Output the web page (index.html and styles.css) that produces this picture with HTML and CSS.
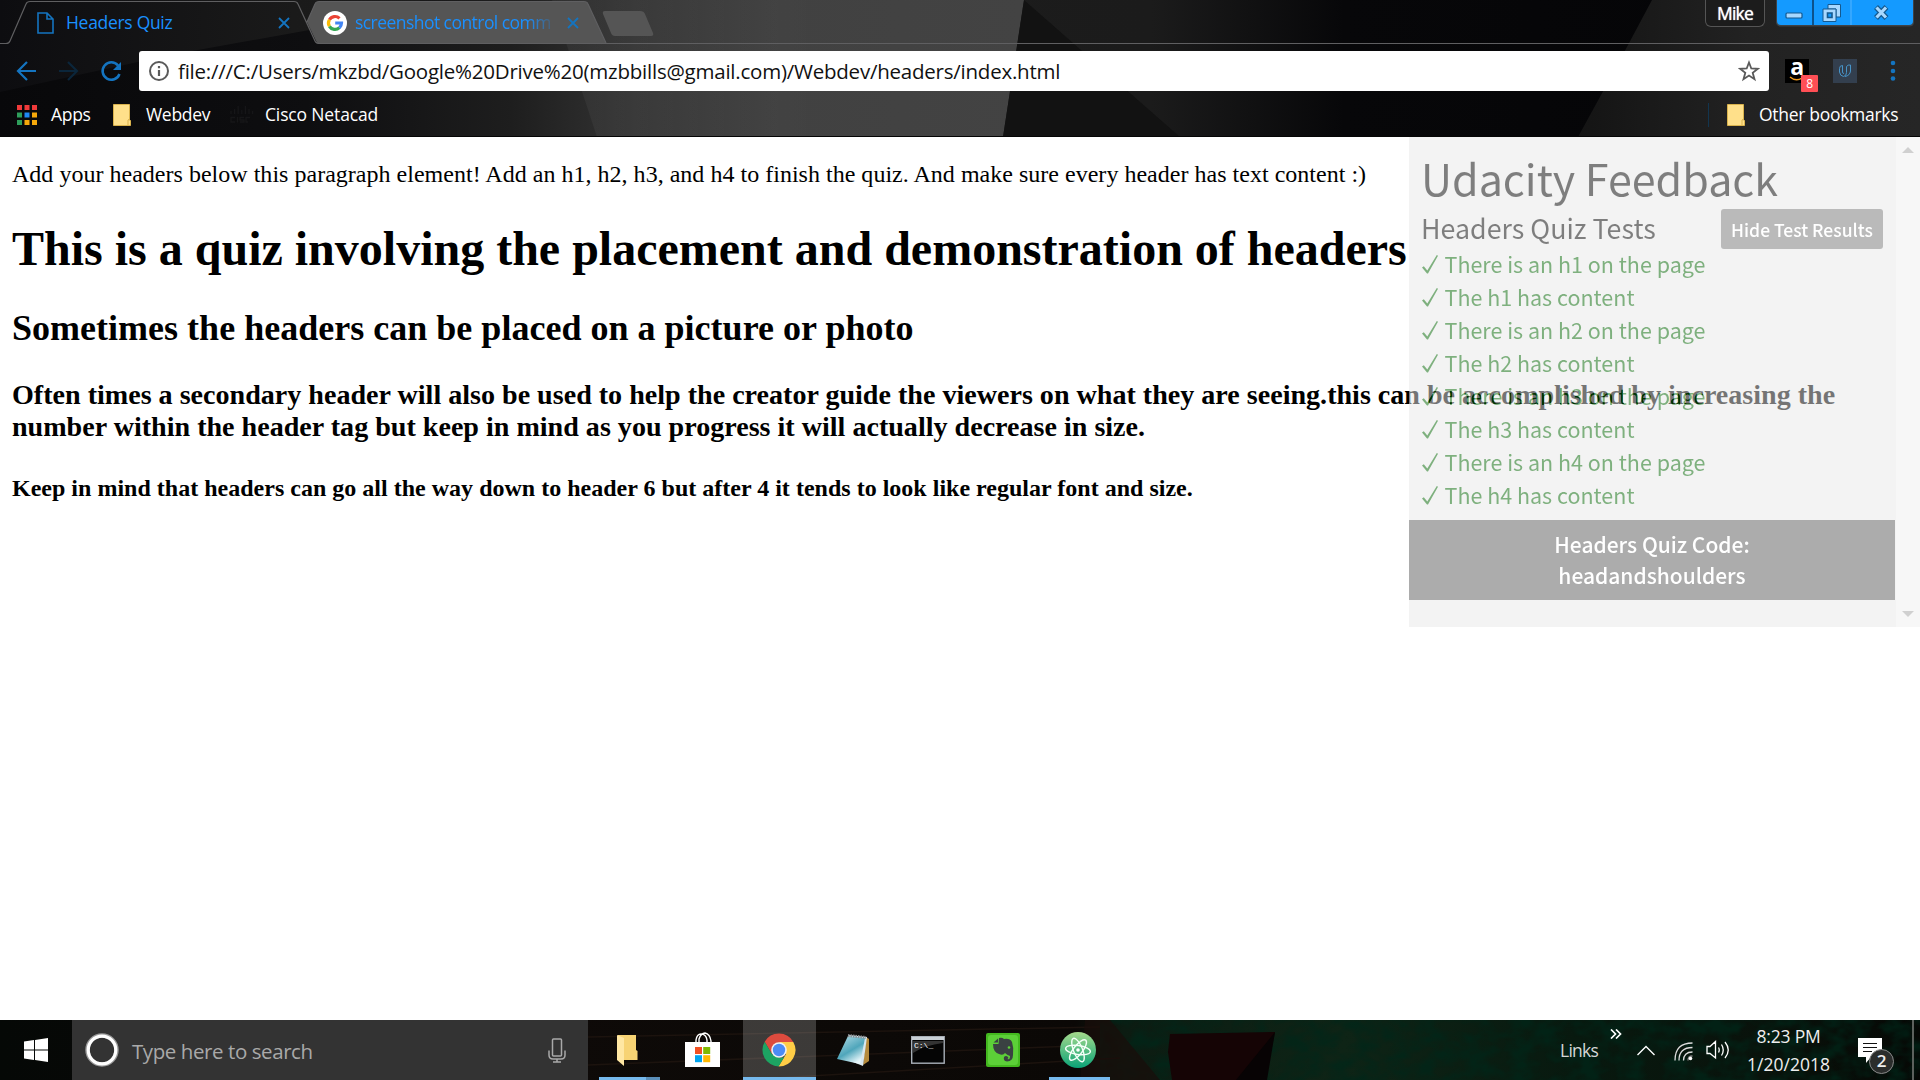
FILE: index.html
```html
<!DOCTYPE html>
<html lang="en">
<head>
<meta charset="utf-8">
<title>Headers Quiz</title>
<link rel="stylesheet" href="styles.css">
</head>
<body>
<svg width="0" height="0" class="defs">
  <symbol id="folder" viewBox="0 0 18 22"><path d="M.5.5h16v15.500l1 .5v5H.5z" fill="#ffe08a" stroke="#d9b24c"/><path d="M15 21v-5l1.500-1" fill="none" stroke="#d9b24c"/></symbol>
  <symbol id="close" viewBox="0 0 12 12"><path d="M1 1l10 10M11 1L1 11" stroke="#1474c0" stroke-width="1.800" fill="none"/></symbol>
  <symbol id="check" viewBox="0 0 16 19"><path d="M0 12.500L1.800 11.200 5.300 15.500 14.800 0 16 .8 6 18.500H5z" fill="#006400"/></symbol>
</svg>

<header class="browser">
  <svg class="theme" viewBox="0 0 1920 137" preserveAspectRatio="none">
    <defs>
      <linearGradient id="left" x1="0" x2="1"><stop offset="0" stop-color="#08080a"/><stop offset=".3" stop-color="#0e0e10"/><stop offset=".5" stop-color="#1e1e1e"/><stop offset=".62" stop-color="#333"/><stop offset=".76" stop-color="#414141"/><stop offset="1" stop-color="#434343"/></linearGradient>
      <linearGradient id="mid" x1="0" x2="1"><stop offset="0" stop-color="#1f1f1f"/><stop offset=".6" stop-color="#1b1b1b"/><stop offset=".7" stop-color="#070709"/><stop offset="1" stop-color="#040406"/></linearGradient>
      <linearGradient id="right" x1="0" x2="1"><stop offset="0" stop-color="#141414"/><stop offset=".5" stop-color="#222"/><stop offset="1" stop-color="#262626"/></linearGradient>
      <linearGradient id="sheen" x1="0" x2="1"><stop offset="0" stop-color="#0d0d10"/><stop offset=".7" stop-color="#1a1a1a"/><stop offset="1" stop-color="#1c1c1c"/></linearGradient>
      <linearGradient id="fold" x1="0" x2="1"><stop offset="0" stop-color="#fff" stop-opacity=".05"/><stop offset="1" stop-color="#fff" stop-opacity="0"/></linearGradient>
    </defs>
    <rect width="1920" height="137" fill="url(#mid)"/>
    <path d="M0 0H1024L1003 137H0z" fill="url(#left)"/>
    <path d="M0 0H420V10L170 55 0 92z" fill="url(#sheen)"/>
    <path d="M552 0H820V137H597z" fill="url(#fold)"/>
    <path d="M1024 0L1180 137H1003z" fill="#121212"/>
    <path d="M1652 0H1920V137H1578L1612 75z" fill="url(#right)"/>
    <path d="M0 136.500H1920" stroke="#050505"/>
  </svg>

  <div class="tabstrip">
    <svg class="tabshapes" viewBox="0 0 1920 45">
      <path d="M307 22L315 4Q316 1.500 319 1.500H584Q587 1.500 588 4L606 43.500H320Q317 43.500 316 41z" fill="#555"/>
      <path d="M0 43.500H6Q9 43.500 10 41L26 4Q27 1.500 30 1.500H294Q297 1.500 298 4L315 41Q316 43.500 320 43.500H1920M307 22L315 4Q316 1.500 319 1.500H584Q587 1.500 588 4L606 43" fill="none" stroke="#5f5f61" stroke-width="1.200"/>
      <path d="M605 11H640Q644 11 645 14L653 33Q654 36 651 36H615Q612 36 611 33L603 14Q602 11 605 11z" fill="#555"/>
    </svg>
    <div class="tab tab-active">
      <svg width="17" height="22" viewBox="0 0 17 22" fill="none" stroke="#1474c0" stroke-width="1.600"><path d="M1 1h9l6 6v14H1zM10 1v6h6"/></svg>
      <span class="tab-title">Headers Quiz</span>
      <svg class="x" width="12" height="12"><use href="#close"/></svg>
    </div>
    <div class="tab tab-back">
      <svg width="24" height="24" viewBox="0 0 24 24"><circle cx="12" cy="12" r="12" fill="#fff"/><g fill="none" stroke-width="3.200"><path d="M6.400 8.700A6.500 6.500 0 0 1 16.500 7.300" stroke="#ea4335"/><path d="M6.400 8.700A6.500 6.500 0 0 0 6.400 15.300" stroke="#fbbc05"/><path d="M6.400 15.300A6.500 6.500 0 0 0 16.400 16.700" stroke="#34a853"/><path d="M16.400 16.700A6.500 6.500 0 0 0 18.500 12H12.200" stroke="#4285f4"/></g></svg>
      <span class="tab-title fade">screenshot control comm</span>
      <svg class="x" width="12" height="12"><use href="#close"/></svg>
    </div>
    <div class="user">Mike</div>
    <svg class="winbtns" width="138" height="27" viewBox="0 0 138 27">
      <path d="M0 0H138V22Q138 26.500 133 26.500H5Q0 26.500 0 22z" fill="#3d4247"/>
      <path d="M1 0H137V21Q137 25 133 25H5Q1 25 1 21z" fill="#149aff"/>
      <path d="M37 0V25" stroke="#0a3a66" stroke-width="1.500"/><path d="M75 0V25" stroke="#55b4ff"/>
      <rect x="10" y="13" width="16" height="5" rx="1" fill="#a8d8ff" stroke="#14598f" stroke-width="1.200"/>
      <g stroke="#14598f"><path d="M52 4.500H64.500V17H60V9H52z" fill="#a8d8ff"/><path d="M47 9H60V21.500H47z" fill="#a8d8ff"/><path d="M51.500 13H56V17.500H51.500z" fill="#149aff" stroke-width="1.600"/></g>
      <path d="M100 7L110.500 18M110.500 7L100 18" stroke="#14598f" stroke-width="5.500"/><path d="M100.500 7.500L110 17.500M110 7.500L100.500 17.500" stroke="#a8d8ff" stroke-width="3.200"/>
    </svg>
  </div>

  <div class="toolbar">
    <svg class="nav" width="106" height="24" viewBox="0 0 106 24" fill="none" stroke="#1474c0" stroke-width="2.200">
      <path d="M20 12H2M11 3L2 12L11 21"/>
      <path d="M43 12H61M52 3L61 12L52 21" stroke="#0b263b"/>
      <path d="M102 6.500A8.700 8.700 0 1 0 103.500 15" stroke-width="2.500"/><path d="M105 3V11H97z" fill="#1474c0" stroke="none"/>
    </svg>
    <div class="omnibox">
      <svg width="22" height="22" viewBox="0 0 22 22"><circle cx="11" cy="11" r="9" fill="none" stroke="#5a5a5a" stroke-width="2"/><path d="M11 10V16M11 6V8.200" stroke="#5a5a5a" stroke-width="2.200"/></svg>
      <span class="url">file:///C:/Users/mkzbd/Google%20Drive%20(mzbbills@gmail.com)/Webdev/headers/index.html</span>
      <svg width="22" height="22" viewBox="0 0 22 22"><path d="M11 2.500L13.300 8.500L19.800 8.800L14.700 12.800L16.500 19.200L11 15.500L5.500 19.200L7.300 12.800L2.200 8.800L8.700 8.500z" fill="none" stroke="#5a5a5a" stroke-width="1.800"/></svg>
    </div>
    <div class="ext amazon"><span>a</span><svg width="18" height="6" viewBox="0 0 18 6"><path d="M2 1Q8 6 14 2M13 1l3-.5-1 3" fill="none" stroke="#f39c1f" stroke-width="1.500"/></svg><b>8</b></div>
    <svg class="ext" width="24" height="24" viewBox="0 0 24 24"><rect width="24" height="24" fill="#333f4e"/><path d="M9.500 6.500Q6.500 6.500 6.500 9.500V13Q7 17 10.500 17.500M9.500 6.500V13Q9.500 14.500 11 14.500M10.500 17.500Q13.500 17 13.500 13.500V7.500Q15 5.500 17.500 6V12Q17 16.500 12 17.500" fill="none" stroke="#4794c8"/></svg>
    <svg class="dots" width="6" height="22" viewBox="0 0 6 22" fill="#1474c0"><circle cx="3" cy="3" r="2.300"/><circle cx="3" cy="11" r="2.300"/><circle cx="3" cy="18.500" r="2.300"/></svg>
  </div>

  <div class="bookmarks">
    <svg width="20" height="20" viewBox="0 0 20 20"><g fill="#f03a3a"><path d="M0 0h5v5H0zM7.500 0h5v5h-5zM15 0h5v5h-5z"/></g><path d="M0 7.500h5v5H0zM0 15h5v5H0z" fill="#2e9e5b"/><path d="M7.500 7.500h5v5h-5z" fill="#1e88f5"/><path d="M15 7.500h5v5h-5zM7.500 15h5v5h-5zM15 15h5v5h-5z" fill="#f5a80a"/></svg>
    <span class="apps">Apps</span>
    <svg width="18" height="22"><use href="#folder"/></svg>
    <span class="webdev">Webdev</span>
    <svg class="cisco" width="24" height="18" viewBox="0 0 24 18"><path d="M1 5V8M4.600 3V8M8.200 0V8M11.800 4V8M15.400 0V8M19 3V8M22.600 5V8" stroke="#161618" stroke-width="1.300"/><path d="M5 11.500H1V16H5M7.500 11V16.500M14 11.500H10V14H14V16H10M20 11.500H16V16H18" fill="none" stroke="#161618" stroke-width="1.300"/></svg>
    <span class="netacad">Cisco Netacad</span>
    <i class="sep"></i>
    <svg width="18" height="22"><use href="#folder"/></svg>
    <span class="other">Other bookmarks</span>
  </div>
</header>

<main class="page">
  <p>Add your headers below this paragraph element! Add an h1, h2, h3, and h4 to finish the quiz. And make sure every header has text content :)</p>
  <h1>This is a quiz involving the placement and demonstration of headers</h1>
  <h2>Sometimes the headers can be placed on a picture or photo</h2>
  <h3>Often times a secondary header will also be used to help the creator guide the viewers on what they are seeing.this can be accomplished by increasing the number within the header tag but keep in mind as you progress it will actually decrease in size.</h3>
  <h4>Keep in mind that headers can go all the way down to header 6 but after 4 it tends to look like regular font and size.</h4>

  <aside class="feedback">
    <div class="panel">
      <div class="title">Udacity Feedback</div>
      <div class="subhead"><span>Headers Quiz Tests</span><button>Hide Test Results</button></div>
      <ul>
        <li><svg width="16" height="19"><use href="#check"/></svg>There is an h1 on the page</li>
        <li><svg width="16" height="19"><use href="#check"/></svg>The h1 has content</li>
        <li><svg width="16" height="19"><use href="#check"/></svg>There is an h2 on the page</li>
        <li><svg width="16" height="19"><use href="#check"/></svg>The h2 has content</li>
        <li><svg width="16" height="19"><use href="#check"/></svg>There is an h3 on the page</li>
        <li><svg width="16" height="19"><use href="#check"/></svg>The h3 has content</li>
        <li><svg width="16" height="19"><use href="#check"/></svg>There is an h4 on the page</li>
        <li><svg width="16" height="19"><use href="#check"/></svg>The h4 has content</li>
      </ul>
      <div class="code">Headers Quiz Code:<br>headandshoulders</div>
    </div>
    <div class="scrollbar"><i class="up"></i><i class="down"></i></div>
  </aside>
</main>

<footer class="taskbar">
  <svg class="wallpaper" viewBox="0 0 1920 60" preserveAspectRatio="none">
    <defs>
      <linearGradient id="desk" x1="0" x2="1"><stop offset="0" stop-color="#050806"/><stop offset=".28" stop-color="#0e0a08"/><stop offset=".45" stop-color="#0c0907"/><stop offset=".56" stop-color="#0b0806"/><stop offset=".585" stop-color="#0c1c12"/><stop offset=".7" stop-color="#0e2416"/><stop offset=".82" stop-color="#08190f"/><stop offset=".92" stop-color="#09120b"/><stop offset="1" stop-color="#060805"/></linearGradient>
      <filter id="leaves" x="0" y="0" width="1" height="1"><feTurbulence type="fractalNoise" baseFrequency=".045 .07" numOctaves="3" seed="4"/><feColorMatrix values="0 0 0 0 0  0 0 0 0 .02  0 0 0 0 .01  2.600 0 0 0 -.9"/></filter>
    </defs>
    <rect width="1920" height="60" fill="url(#desk)"/>
    <rect x="1100" width="820" height="60" filter="url(#leaves)" opacity=".7"/>
    <path d="M588 17L1100 7M588 45L1100 25M740 60L1120 38" stroke="#1c130e" stroke-width="1.500"/>
    <path d="M1085 0H1110L1160 60H1080z" fill="#1a0d0a" opacity=".7"/>
    <path d="M1170 14L1275 12L1265 60H1172L1168 32z" fill="#150405"/>
    <path d="M1275 12L1236 60H1267z" fill="#070304"/>
  </svg>
  <div class="start"><svg width="24" height="24" viewBox="0 0 24 24" fill="#fff"><path d="M0 3.400L10 2V11.500H0zM11 1.900L24 0V11.500H11zM0 12.500H10V22L0 20.600zM11 12.500H24V24L11 22.100z"/></svg></div>
  <div class="search">
    <svg width="34" height="34" viewBox="0 0 34 34"><circle cx="17" cy="17" r="14.500" fill="none" stroke="#999" stroke-width="4.500"/><circle cx="17" cy="17" r="13.800" fill="none" stroke="#fff" stroke-width="3.200"/></svg>
    <span>Type here to search</span>
    <svg width="18" height="25" viewBox="0 0 18 25" fill="none" stroke="#a9a9a9" stroke-width="1.500"><rect x="4.500" y="1" width="9" height="17" rx="1"/><path d="M1 12.500V17Q1 21 5 21H13Q17 21 17 17V12.500M9 21V24M5 24H13"/></svg>
  </div>
  <nav class="apps-row">
    <div class="app running explorer"><svg width="22" height="32" viewBox="0 0 22 32"><path d="M1 1H19V16L20.500 17V26H1z" fill="#f7d374"/><path d="M0 1L7 4V32L0 26z" fill="#ffe7a3"/></svg></div>
    <div class="app"><svg width="36" height="36" viewBox="0 0 36 36"><path d="M11 12V8Q12 2 16 2Q21 2 22 8V12M14 12V7Q16 1 20 1Q25 2 26 9V12" fill="none" stroke="#fff" stroke-width="1.400"/><path d="M0 10H35V35H0z" fill="#fff"/><path d="M10 15h7v7h-7z" fill="#f25022"/><path d="M18.200 15h7v7h-7z" fill="#7fba00"/><path d="M10 23.200h7v7h-7z" fill="#00a4ef"/><path d="M18.200 23.200h7v7h-7z" fill="#ffb900"/></svg></div>
    <div class="app running active"><svg width="34" height="34" viewBox="0 0 34 34"><path d="M31.300 8.900A16.500 16.500 0 0 1 16.500 33.500L24.100 21.100 17 8.900z" fill="#ffcd46"/><path d="M2.700 8.700L10 21.200 17 17 17 8.900H31.300A16.500 16.500 0 0 0 2.700 8.700z" fill="#dd4b3e"/><path d="M2.700 8.700L10 21.200 17 24.800 22 24.500 16.500 33.500A16.500 16.500 0 0 1 2.700 8.700z" fill="#1da462"/><circle cx="17" cy="17" r="7.800" fill="#f1f1f1"/><circle cx="17" cy="17" r="6.200" fill="#4c8bf5"/></svg></div>
    <div class="app"><svg width="34" height="34" viewBox="0 0 34 34"><defs><linearGradient id="pad" x1="0" y1="0" x2=".6" y2="1"><stop offset="0" stop-color="#b9dfe8"/><stop offset=".6" stop-color="#4fa6bb"/><stop offset="1" stop-color="#e7f6fa"/></linearGradient></defs><path d="M30 4L33 6V28L27 32z" fill="#b58a3c"/><path d="M13 2L31 4 27 33 17 29z" fill="#d9e7ee"/><path d="M12 3L29 5 24 31 1 26z" fill="url(#pad)"/><path d="M12 2.500L30 4.500" stroke="#8a8f93" stroke-width="3" stroke-dasharray="1.500 1"/></svg></div>
    <div class="app"><svg width="34" height="28" viewBox="0 0 34 28"><rect x=".7" y=".7" width="32.500" height="26.500" fill="#050505" stroke="#a9b0b8" stroke-width="1.400"/><path d="M1 1H33V4H1z" fill="#c9d0d6"/><path d="M2 5H32L32 7Q14 9 2 17z" fill="#333"/><text x="3" y="12" class="prompt">C:\_</text></svg></div>
    <div class="app"><svg width="34" height="34" viewBox="0 0 34 34"><rect width="34" height="34" rx="2" fill="#43b91f"/><rect x="2" y="2" width="30" height="30" rx="3" fill="#5ccf38"/><path d="M13 5Q16 4 18 6Q24 5 26 9Q28 15 27 22Q27 28 21 28.500Q17 28 18 24Q20 22 22 24Q23 25 21.500 26Q24 27 24 23Q21 22 19 20Q17 23 13 21Q7 19 7 11H12.500z" fill="#3a4142"/><path d="M7.500 9.500L12 5.500V9.500z" fill="#3a4142"/><circle cx="23" cy="14.500" r="1.300" fill="#5ccf38"/></svg></div>
    <div class="app running atom"><svg width="36" height="36" viewBox="0 0 36 36"><defs><linearGradient id="atomg" x1="0" y1="0" x2="0" y2="1"><stop offset="0" stop-color="#a5d98c"/><stop offset="1" stop-color="#0ba377"/></linearGradient></defs><circle cx="18" cy="18" r="18" fill="url(#atomg)"/><g fill="none" stroke="#f4fff8" stroke-width="1.400"><ellipse cx="18" cy="18" rx="12.500" ry="4.500" transform="rotate(8 18 18)"/><ellipse cx="18" cy="18" rx="12.500" ry="4.500" transform="rotate(68 18 18)"/><ellipse cx="18" cy="18" rx="12.500" ry="4.500" transform="rotate(128 18 18)"/></g><circle cx="18" cy="18" r="1.800" fill="#fff"/></svg></div>
  </nav>
  <div class="tray">
    <span class="links">Links</span>
    <svg class="more" width="12" height="10" viewBox="0 0 12 10" fill="none" stroke="#fff" stroke-width="1.700"><path d="M1 .5L5.500 5 1 9.500M6 .5L10.500 5 6 9.500"/></svg>
    <svg class="caret" width="18" height="11" viewBox="0 0 18 11" fill="none" stroke="#fff" stroke-width="1.400"><path d="M.5 10L9 1.500 17.500 10"/></svg>
    <svg class="wifi" width="19" height="19" viewBox="0 0 19 19" fill="none" stroke="#ddd" stroke-width="1.300"><path d="M1 18.500Q1 1 18.500 1M5 18.500Q5 5.500 18.500 5.500M9.500 18.500Q9.500 10 18.500 10"/><path d="M14 18.500Q14 14 18.500 14" stroke="#888"/><circle cx="16.500" cy="16.500" r="1.800" fill="#fff" stroke="none"/></svg>
    <svg class="sound" width="24" height="20" viewBox="0 0 24 20" fill="none" stroke="#fff" stroke-width="1.300"><path d="M1 6.500H4L9.500 1.500V18L4 13.500H1zM12.500 7.500Q14 10 12.500 12.500M15.500 4.500Q19 10 15.500 15.500M19 2Q25.500 10 19 18"/></svg>
    <div class="clock"><span class="time">8:23 PM</span><span>1/20/2018</span></div>
    <div class="action"><svg width="24" height="26" viewBox="0 0 24 26"><path d="M0 0H24V19H13L8 25V19H0z" fill="#fff"/><path d="M5 5.500H19M5 9.500H19M5 13.500H14" stroke="#111" stroke-width="1.200"/></svg><b>2</b></div>
    <i class="peek"></i>
  </div>
</footer>
</body>
</html>
```
FILE: styles.css
```css
* { box-sizing: border-box; }
html, body { margin: 0; height: 100%; }
body {
  display: flex;
  flex-direction: column;
  width: 1920px;
  height: 1080px;
  overflow: hidden;
  background: #fff;
  font-family: "Open Sans", "Noto Sans", sans-serif;
  font-size: 17.5px;
}
svg { display: block; flex: none; }
.defs { position: absolute; }

/* Browser frame */
.browser {
  position: relative;
  flex: none;
  height: 137px;
  color: #fff;
  letter-spacing: -.3px;
  white-space: nowrap;
}
.theme, .tabshapes, .wallpaper { position: absolute; top: 0; left: 0; width: 100%; height: 100%; }
.tabstrip { position: relative; display: flex; height: 45px; }
.tabshapes { height: 45px; }
.tab {
  position: relative;
  display: flex;
  align-items: center;
  height: 46px;
  flex: none;
  color: #1a90ff;
}
.tab-active { width: 307px; padding: 0 17px 0 37px; gap: 12px; }
.tab-back { width: 300px; padding: 0 28px 0 16px; gap: 8px; }
.tab-title { flex: 1; line-height: 24px; margin-top: -2px; }
.fade {
  overflow: hidden;
  letter-spacing: -.55px;
  -webkit-mask-image: linear-gradient(90deg, #000 86%, transparent 101%);
  mask-image: linear-gradient(90deg, #000 86%, transparent 101%);
}
.tab-back .x { margin-left: 4px; }
.user {
  position: relative;
  width: 60px;
  height: 27px;
  margin: 0 11px 0 auto;
  border: 1px solid #555;
  border-top: 0;
  border-radius: 0 0 6px 6px;
  background: #1c1c1c;
  line-height: 27px;
  letter-spacing: -.8px;
  text-align: center;
  text-shadow: 0 0 1px #fff;
}
.winbtns { position: relative; margin-right: 6px; }

.toolbar { position: relative; display: flex; align-items: center; height: 52px; padding-left: 16px; }
.nav { margin-right: 17px; }
.omnibox {
  display: flex;
  align-items: center;
  width: 1630px;
  height: 40px;
  padding: 0 9px;
  border-radius: 3px;
  background: #fff;
  color: #111;
}
.url { flex: 1; margin-left: 8px; font-size: 20.5px; letter-spacing: -.23px; line-height: 40px; }
.ext { position: relative; margin-right: 24px; width: 24px; height: 24px; }
.amazon { margin-left: 16px; background: #000; }
.amazon span { display: block; font-size: 23px; font-weight: 700; line-height: 15px; text-align: center; }
.amazon svg { margin: 2px 0 0 3px; }
.amazon b {
  position: absolute;
  left: 16px;
  top: 16px;
  width: 17px;
  height: 17px;
  border-radius: 1px;
  background: #ff4f55;
  font-size: 12px;
  font-weight: 400;
  line-height: 18px;
  text-align: center;
}
.dots { margin-left: 9px; }

.bookmarks { position: relative; display: flex; align-items: center; height: 36px; padding: 0 23px 0 17px; }
.bookmarks span { margin-top: -2px; }
.apps { width: 62px; padding-left: 14px; }
.apps + svg { margin-left: 14px; }
.webdev { width: 84px; margin-left: 15px; }
.netacad { margin-left: 11px; letter-spacing: -.15px; }
.sep { width: 1px; height: 24px; margin: 0 18px 0 auto; background: #12354f; }
.other { width: 138px; margin-left: 14px; }

/* Document */
.page {
  position: relative;
  flex: 1;
  display: flow-root;
  padding: 0 12px;
  background: #fff;
  color: #000;
  font: 24px "Liberation Serif", serif;
}
.page p { margin: 24px 0; letter-spacing: .018px; }
h1 { margin: 32.8px 0 31.4px; font-size: 48px; }
h2 { margin: 29.88px 0; font-size: 36px; letter-spacing: .015px; }
h3 { margin: 28.08px 0; font-size: 28.08px; }
h4 { margin: 31.92px 0; font-size: 24px; letter-spacing: .01px; }

/* Translucent results widget floating over the document */
.feedback {
  position: absolute;
  top: 0;
  right: 0;
  display: flex;
  width: 511px;
  height: 490px;
  opacity: .5;
  background: #e8e8e8;
  color: #000;
  font-family: "Noto Sans CJK SC", sans-serif;
}
.panel { width: 486px; }
.title { padding: 11px 12px 0; height: 71px; font-size: 43px; line-height: 58px; }
.subhead { display: flex; justify-content: space-between; align-items: center; height: 41px; padding: 0 12px; font-size: 26.8px; }
.subhead span { line-height: 38px; margin-top: -2px; }
button {
  width: 162px;
  height: 40px;
  padding: 0;
  border: 0;
  border-radius: 3px;
  background: #777;
  color: #fff;
  font: 500 17.5px/41px "Noto Sans CJK SC", sans-serif;
}
ul { margin: 0; padding: 0 12px; list-style: none; color: #006400; font-size: 21.5px; }
li { display: flex; height: 33px; line-height: 29px; }
li svg { margin: 6px 6.5px 0 1px; }
.code {
  height: 80px;
  margin-top: 7px;
  padding-top: 9px;
  background: #5b5b5b;
  color: #fff;
  font-size: 21px;
  font-weight: 500;
  line-height: 31px;
  text-align: center;
}
.scrollbar { display: flex; flex-direction: column; justify-content: space-between; align-items: center; width: 24px; margin-left: 1px; padding: 10px 0; background: #f1f1f1; }
.scrollbar i { border: 6px solid transparent; }
.scrollbar .up { border-top: 0; border-bottom-color: #a3a3a3; }
.scrollbar .down { border-bottom: 0; border-top-color: #a3a3a3; }

/* Taskbar */
.taskbar { position: relative; display: flex; flex: none; height: 60px; color: #fff; white-space: nowrap; }
.start { position: relative; display: flex; align-items: center; width: 72px; padding-left: 24px; }
.search { position: relative; display: flex; align-items: center; width: 516px; padding: 0 22px 0 13px; background: #333; }
.search span { flex: 1; margin-left: 13px; color: #a9a9a9; font-size: 20.5px; letter-spacing: -.42px; line-height: 60px; padding-top: 2px; }
.apps-row { position: relative; display: flex; margin-left: 3px; }
.app { position: relative; display: flex; align-items: center; justify-content: center; width: 75px; height: 60px; }
.app svg { margin-left: -1px; }
.running::after { content: ""; position: absolute; left: 8px; right: 6px; bottom: 0; height: 3px; background: #76b9ed; }
.explorer::after { background: linear-gradient(90deg, #76b9ed 47px, #5b8fb9 47px); }
.active { width: 73px; margin: 0 0 0 2px; background: rgba(255, 255, 255, .2); }
.active svg { margin-left: -2px; }
.active::after { left: 0; right: 0; }
.prompt { fill: #fff; font: 8px "Liberation Mono", monospace; }
.tray { position: relative; display: flex; align-items: center; margin-left: auto; color: #eee; }
.links { width: 38px; margin-right: 12px; letter-spacing: -.75px; color: #d6d6d6; }
.more { margin: 0 15px 33px 0; }
.caret { margin-right: 19px; }
.wifi { margin: 2px 13px 0 0; }
.sound { margin-right: 17px; }
.clock { display: flex; flex-direction: column; align-items: center; width: 83px; line-height: 28px; }
.time { letter-spacing: -.2px; }
.action { position: relative; width: 24px; height: 24px; margin: 0 30px 0 28px; }
.action b {
  position: absolute;
  left: 11px;
  top: 11px;
  width: 25px;
  height: 25px;
  border: 1.500px solid #8a8a8a;
  border-radius: 50%;
  background: #2b2d2c;
  font-size: 17px;
  font-weight: 600;
  line-height: 22px;
  text-align: center;
}
.peek { width: 2px; height: 60px; margin-right: 6px; background: #5c615d; }
```
